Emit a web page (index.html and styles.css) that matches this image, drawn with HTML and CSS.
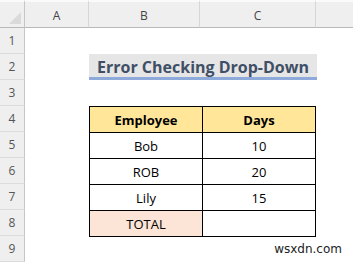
FILE: index.html
```html
<!DOCTYPE html>
<html>
<head>
<meta charset="utf-8">
<link rel="stylesheet" href="styles.css">
</head>
<body>
<div class="sheet">
  <div class="corner"><span class="tri"></span></div>
  <div class="colhead">A</div>
  <div class="colhead">B</div>
  <div class="colhead">C</div>
  <div class="colhead last"></div>

  <div class="rowhead r1">1</div>
  <div class="rowhead r2">2</div>
  <div class="rowhead r3">3</div>
  <div class="rowhead r4">4</div>
  <div class="rowhead r5">5</div>
  <div class="rowhead r6">6</div>
  <div class="rowhead r7">7</div>
  <div class="rowhead r8">8</div>
  <div class="rowhead r9">9</div>

  <div class="title">Error Checking Drop-Down</div>

  <table class="data">
    <tr class="hdr"><th>Employee</th><th>Days</th></tr>
    <tr><td>Bob</td><td>10</td></tr>
    <tr><td>ROB</td><td>20</td></tr>
    <tr><td>Lily</td><td>15</td></tr>
    <tr><td class="total">TOTAL</td><td></td></tr>
  </table>

  <div class="mark">wsxdn.com</div>
</div>
</body>
</html>
```
FILE: styles.css
```css
* { box-sizing: border-box; }
html, body { margin: 0; padding: 0; background: #fff; }
body { width: 353px; height: 265px; overflow: hidden; font-family: "Open Sans", "Liberation Sans", sans-serif; }

.sheet {
  display: grid;
  grid-template-columns: 25px 64px 111px 116px 1fr;
  grid-template-rows: 28px repeat(9, 26px);
  width: 353px;
  height: 265px;
}

.corner, .colhead {
  background: #efefef;
  border-top: 2px solid #fafafa;
  border-bottom: 1px solid #b9b9b9;
  border-right: 1px solid #d6d6d6;
  grid-row: 1;
}
.corner { grid-column: 1; position: relative; border-right-color: #c6c6c6; }
.tri {
  position: absolute;
  right: 3px; bottom: 3px;
  width: 0; height: 0;
  border-left: 12px solid transparent;
  border-bottom: 12px solid #dadada;
}
.colhead {
  display: flex; align-items: center; justify-content: center;
  font-size: 12px; color: #444;
  padding-top: 1px;
}
.colhead.last { border-right: none; }

.rowhead {
  grid-column: 1;
  background: #efefef;
  border-right: 1px solid #c6c6c6;
  border-bottom: 1px solid #dcdcdc;
  display: flex; align-items: center; justify-content: center;
  font-size: 12px; color: #555;
}
.r1 { grid-row: 2; } .r2 { grid-row: 3; } .r3 { grid-row: 4; }
.r4 { grid-row: 5; } .r5 { grid-row: 6; } .r6 { grid-row: 7; }
.r7 { grid-row: 8; } .r8 { grid-row: 9; } .r9 { grid-row: 10; }

.title {
  grid-column: 3 / 5;
  grid-row: 3;
  background: #e7e6e6;
  border-bottom: 3px solid #8eaadb;
  color: #3f4f66;
  font-weight: bold;
  font-size: 16px;
  display: flex; align-items: center; justify-content: center;
  padding-top: 2px;
  margin-right: -1px;
}

.data {
  grid-column: 3 / 5;
  grid-row: 5 / 10;
  border-collapse: collapse;
  width: 227px;
  height: 131px;
  margin-top: 0;
  font-size: 13px;
  color: #000;
}
.data th, .data td {
  border: 1px solid #000;
  text-align: center;
  padding: 0;
  height: 26px;
  width: 50%;
}
.data th:first-child, .data td:first-child { width: 111px; }
.hdr th { background: #ffe699; font-weight: bold; }
.data td.total { background: #fce4d6; }

.mark {
  grid-column: 4 / 6;
  grid-row: 10;
  justify-self: end;
  align-self: center;
  margin-right: 11px;
  font-family: "DejaVu Sans", sans-serif;
  font-size: 12px;
  color: #222;
}
```
